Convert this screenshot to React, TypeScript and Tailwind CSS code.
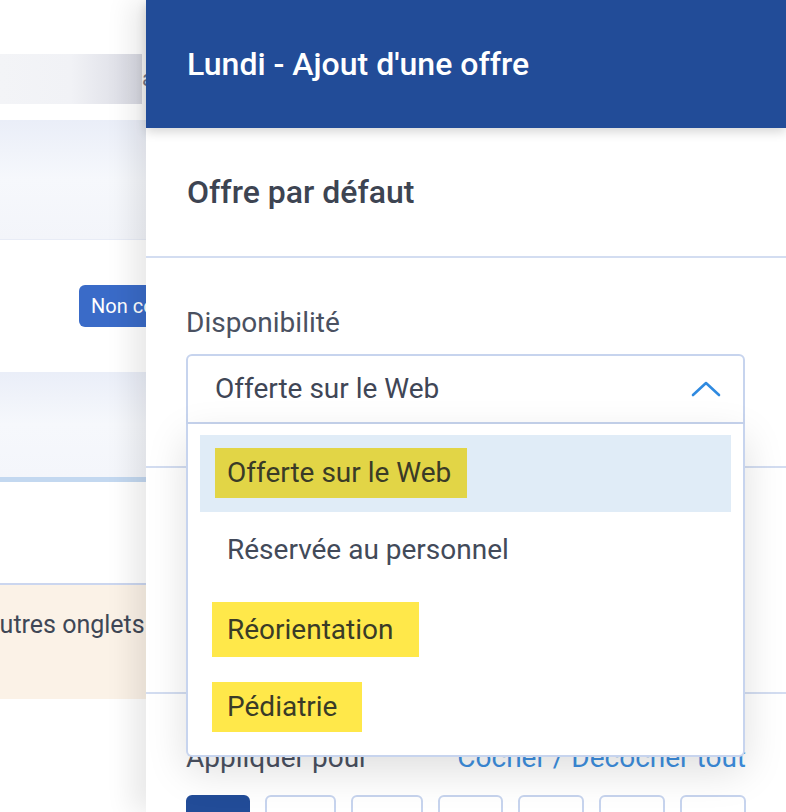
import React from 'react';

type Opt = { label: string; active: boolean; wrap: string; mark: string };

const options: Opt[] = [
  { label: 'Offerte sur le Web', active: true, wrap: 'pt-[13px] pl-[15px]', mark: 'bg-[#e2d546] pl-[12px] pr-[16px] h-[50px]' },
  { label: 'Réservée au personnel', active: false, wrap: 'pt-[13px] pl-0', mark: 'pl-[27px] h-[50px]' },
  { label: 'Réorientation', active: false, wrap: 'pt-[13px] pl-[12px]', mark: 'bg-[#ffe84a] pl-[15px] pr-[26px] h-[55px]' },
  { label: 'Pédiatrie', active: false, wrap: 'pt-[16px] pl-[12px]', mark: 'bg-[#ffe84a] pl-[15px] pr-[25px] h-[50px]' },
];

const days = ['w-[64px]', 'w-[71px]', 'w-[72px]', 'w-[65px]', 'w-[66px]', 'w-[66px]', 'w-[66px]'];

function BackgroundPage() {
  return (
    <div className="w-[146px] shrink-0 overflow-hidden flex flex-col">
      <div className="mt-[54px] flex items-center h-[50px]">
        <div className="w-[142px] h-full shrink-0 bg-gradient-to-r from-[#f3f4f7] via-[#f1f2f6] to-[#d8d9e2]" />
        <span className="text-[22px] text-[#737a8c] leading-none">a</span>
      </div>
      <div className="mt-[16px] h-[120px] bg-gradient-to-b from-[#eaeef8] via-[#f6f8fc] to-[#f3f5fa] border-b border-[#e8ecf6]" />
      <div className="mt-[45px] h-[42px] flex justify-end">
        <div className="w-[67px] h-full rounded-l-[6px] bg-[#3a6bc8] pl-[12px] flex items-center overflow-hidden">
          <span className="whitespace-nowrap text-[20px] text-white">Non conforme</span>
        </div>
      </div>
      <div className="mt-[45px] h-[110px] bg-gradient-to-b from-[#eaeef8] via-[#f6f8fc] to-[#f4f6fb] border-b-[5px] border-[#c3d8f0]" />
      <div className="mt-[101px] h-[116px] bg-[#fbf2e7] border-t-2 border-[#cbd6ef] overflow-hidden pt-[24px]">
        <span className="block -ml-[14px] whitespace-nowrap text-[25px] leading-[32px] text-[#3f4756]">autres onglets pour</span>
      </div>
    </div>
  );
}

function Dropdown() {
  return (
    <div className="absolute left-[40px] top-[354px] w-[559px] z-20">
      <div className="h-[70px] border-2 border-[#c7d4ee] rounded-t-[6px] bg-white flex items-center justify-between pl-[27px] pr-[22px]">
        <span className="text-[28px] leading-[32px] text-[#3f4656]">Offerte sur le Web</span>
        <svg width="30" height="18" viewBox="0 0 30 18" fill="none">
          <polyline points="2,15 15,3 28,15" stroke="#2f8ae0" strokeWidth="2.6" strokeLinecap="round" strokeLinejoin="round" />
        </svg>
      </div>
      <div className="border-2 border-t-0 border-[#c7d4ee] rounded-b-[6px] bg-white px-[12px] pt-[11px] pb-[12px] shadow-[0_14px_40px_rgba(0,0,0,0.13)]">
        {options.map((o) => (
          <div key={o.label} className={`h-[77px] ${o.active ? 'bg-[#e0ecf7]' : ''} ${o.wrap}`}>
            <div className={`inline-flex items-center ${o.mark}`}>
              <span className={`text-[28px] leading-[32px] ${o.mark.includes('bg-') ? 'text-[#3a3b27]' : 'text-[#424a59]'}`}>
                {o.label}
              </span>
            </div>
          </div>
        ))}
      </div>
    </div>
  );
}

export default function App() {
  return (
    <div className="w-[786px] h-[812px] overflow-hidden flex bg-white" style={{ fontFamily: 'Roboto, "Noto Sans", sans-serif' }}>
      <BackgroundPage />
      <div className="relative flex-1 bg-white flex flex-col shadow-[-14px_0_26px_rgba(0,0,0,0.09)]">
        <div className="relative z-10 h-[128px] shrink-0 bg-[#224c98] flex items-center px-[41px] shadow-[0_4px_10px_rgba(0,0,0,0.16)]">
          <h1 className="text-[32px] leading-[36px] font-medium text-white">Lundi - Ajout d'une offre</h1>
        </div>
        <div className="h-[130px] shrink-0 flex items-center px-[41px] border-b-2 border-[#d3ddf1]">
          <h2 className="text-[32px] leading-[36px] font-medium text-[#3d4452]">Offre par défaut</h2>
        </div>
        <div className="h-[210px] shrink-0 px-[40px] pt-[49px] border-b-2 border-[#d3ddf1]">
          <div className="text-[28px] leading-[32px] text-[#4a5161]">Disponibilité</div>
        </div>
        <div className="h-[226px] shrink-0 border-b-2 border-[#d3ddf1]" />
        <div className="px-[40px] pt-[48px]">
          <div className="flex items-center justify-between text-[28px] leading-[32px]">
            <span className="text-[#4a5161]">Appliquer pour</span>
            <span className="text-[#3d8fe0]">Cocher / Décocher tout</span>
          </div>
          <div className="mt-[21px] flex justify-between">
            {days.map((w, i) => (
              <div
                key={i}
                className={`${w} h-[50px] rounded-[6px] border-2 ${i === 0 ? 'bg-[#224c98] border-[#224c98]' : 'bg-white border-[#c7d4ee]'}`}
              />
            ))}
          </div>
        </div>
        <Dropdown />
      </div>
    </div>
  );
}
